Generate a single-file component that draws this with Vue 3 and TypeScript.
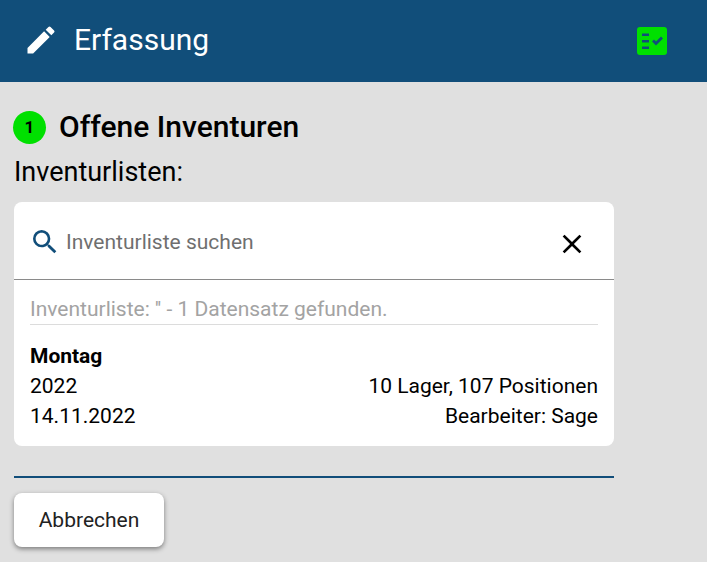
<script setup lang="ts">
const meta = [
  { left: '2022', right: '10 Lager, 107 Positionen' },
  { left: '14.11.2022', right: 'Bearbeiter: Sage' }
]
</script>

<template>
  <div class="page">
    <header class="bar">
      <div class="bar-left">
        <svg class="edit" viewBox="0 0 24 24"><path fill="#fff" d="M3 17.25V21h3.75L17.81 9.94l-3.75-3.75L3 17.25zM20.71 7.04a1 1 0 0 0 0-1.41l-2.34-2.34a1 1 0 0 0-1.41 0l-1.83 1.83 3.75 3.75 1.83-1.83z"/></svg>
        <span class="title">Erfassung</span>
      </div>
      <svg class="status" viewBox="0 0 30 28">
        <rect width="30" height="28" rx="3" fill="#00e000"/>
        <path fill="#114e7a" d="M5 6.5h7v2.4H5zM5 13h7v2.4H5zM5 19.5h7v2.4H5z"/>
        <path fill="none" stroke="#114e7a" stroke-width="2.8" d="M16 13.6l3 3 6-6"/>
      </svg>
    </header>

    <main class="content">
      <div class="heading">
        <span class="step">1</span>
        <h1>Offene Inventuren</h1>
      </div>
      <div class="label">Inventurlisten:</div>

      <section class="card">
        <div class="search">
          <svg class="mag" viewBox="0 0 24 24"><path fill="#114e7a" d="M15.5 14h-.79l-.28-.27A6.47 6.47 0 0 0 16 9.5 6.5 6.5 0 1 0 9.5 16c1.61 0 3.09-.59 4.23-1.57l.27.28v.79l5 4.99L20.49 19l-4.99-5zm-6 0C7.01 14 5 11.99 5 9.5S7.01 5 9.5 5 14 7.01 14 9.5 11.99 14 9.5 14z"/></svg>
          <span class="placeholder">Inventurliste suchen</span>
          <svg class="close" viewBox="0 0 24 24"><path fill="#000" d="M19 6.41 17.59 5 12 10.59 6.41 5 5 6.41 10.59 12 5 17.59 6.41 19 12 13.41 17.59 19 19 17.59 13.41 12z"/></svg>
        </div>
        <div class="results">
          <div class="found">Inventurliste: '' - 1 Datensatz gefunden.</div>
          <div class="item">
            <div class="name">Montag</div>
            <div v-for="row in meta" :key="row.left" class="row">
              <span>{{ row.left }}</span>
              <span>{{ row.right }}</span>
            </div>
          </div>
        </div>
      </section>

      <hr class="rule" />
      <button class="cancel" type="button">Abbrechen</button>
    </main>
  </div>
</template>

<style scoped>
.page {
  width: 707px;
  height: 562px;
  overflow: hidden;
  background: #e0e0e0;
  font-family: Roboto, "Liberation Sans", sans-serif;
  color: #000;
}
.bar {
  height: 82px;
  box-sizing: border-box;
  background: #114e7a;
  display: flex;
  align-items: center;
  justify-content: space-between;
  padding: 0 40px 2px 23px;
}
.bar-left {
  display: flex;
  align-items: center;
  gap: 15px;
}
.edit {
  width: 36px;
  height: 36px;
}
.title {
  color: #fff;
  font-size: 30px;
  line-height: 34px;
}
.status {
  width: 30px;
  height: 28px;
  margin-top: 2px;
}
.content {
  width: 600px;
  margin-left: 14px;
}
.heading {
  display: flex;
  align-items: center;
  margin: 28px 0 0 -1px;
  height: 34px;
  gap: 13px;
}
.step {
  width: 33px;
  height: 33px;
  border-radius: 50%;
  background: #00e000;
  font-size: 17px;
  font-weight: 700;
  display: flex;
  align-items: center;
  justify-content: center;
}
h1 {
  margin: 0;
  font-size: 30px;
  line-height: 34px;
  font-weight: 500;
}
.label {
  margin-top: 13px;
  font-size: 27px;
  line-height: 30px;
}
.card {
  margin-top: 15px;
  background: #fff;
  border-radius: 8px;
  height: 244px;
}
.search {
  height: 77px;
  border-bottom: 1px solid #8a8a8a;
  display: flex;
  align-items: center;
  padding: 0 26px 0 15px;
}
.mag {
  width: 32px;
  height: 32px;
  margin-top: 3px;
}
.placeholder {
  margin-left: 5px;
  flex: 1;
  font-size: 21px;
  color: #6f6f6f;
  margin-top: 2px;
}
.close {
  width: 32px;
  height: 32px;
  margin-top: 6px;
}
.results {
  padding: 15px 16px 0;
}
.found {
  font-size: 21px;
  line-height: 29px;
  color: #a3a3a3;
  border-bottom: 1px solid #dcdcdc;
}
.item {
  padding-top: 16px;
}
.name {
  font-size: 21px;
  line-height: 30px;
  font-weight: 700;
}
.row {
  display: flex;
  justify-content: space-between;
  font-size: 21px;
  line-height: 30px;
}
.rule {
  margin: 30px 0 0;
  border: 0;
  border-top: 2px solid #114e7a;
}
.cancel {
  display: block;
  margin-top: 15px;
  width: 150px;
  height: 54px;
  border: 0;
  border-radius: 8px;
  background: #fff;
  color: #222;
  font-family: inherit;
  font-size: 21px;
  box-shadow: 0 2px 5px rgba(0, 0, 0, 0.45);
}
</style>
